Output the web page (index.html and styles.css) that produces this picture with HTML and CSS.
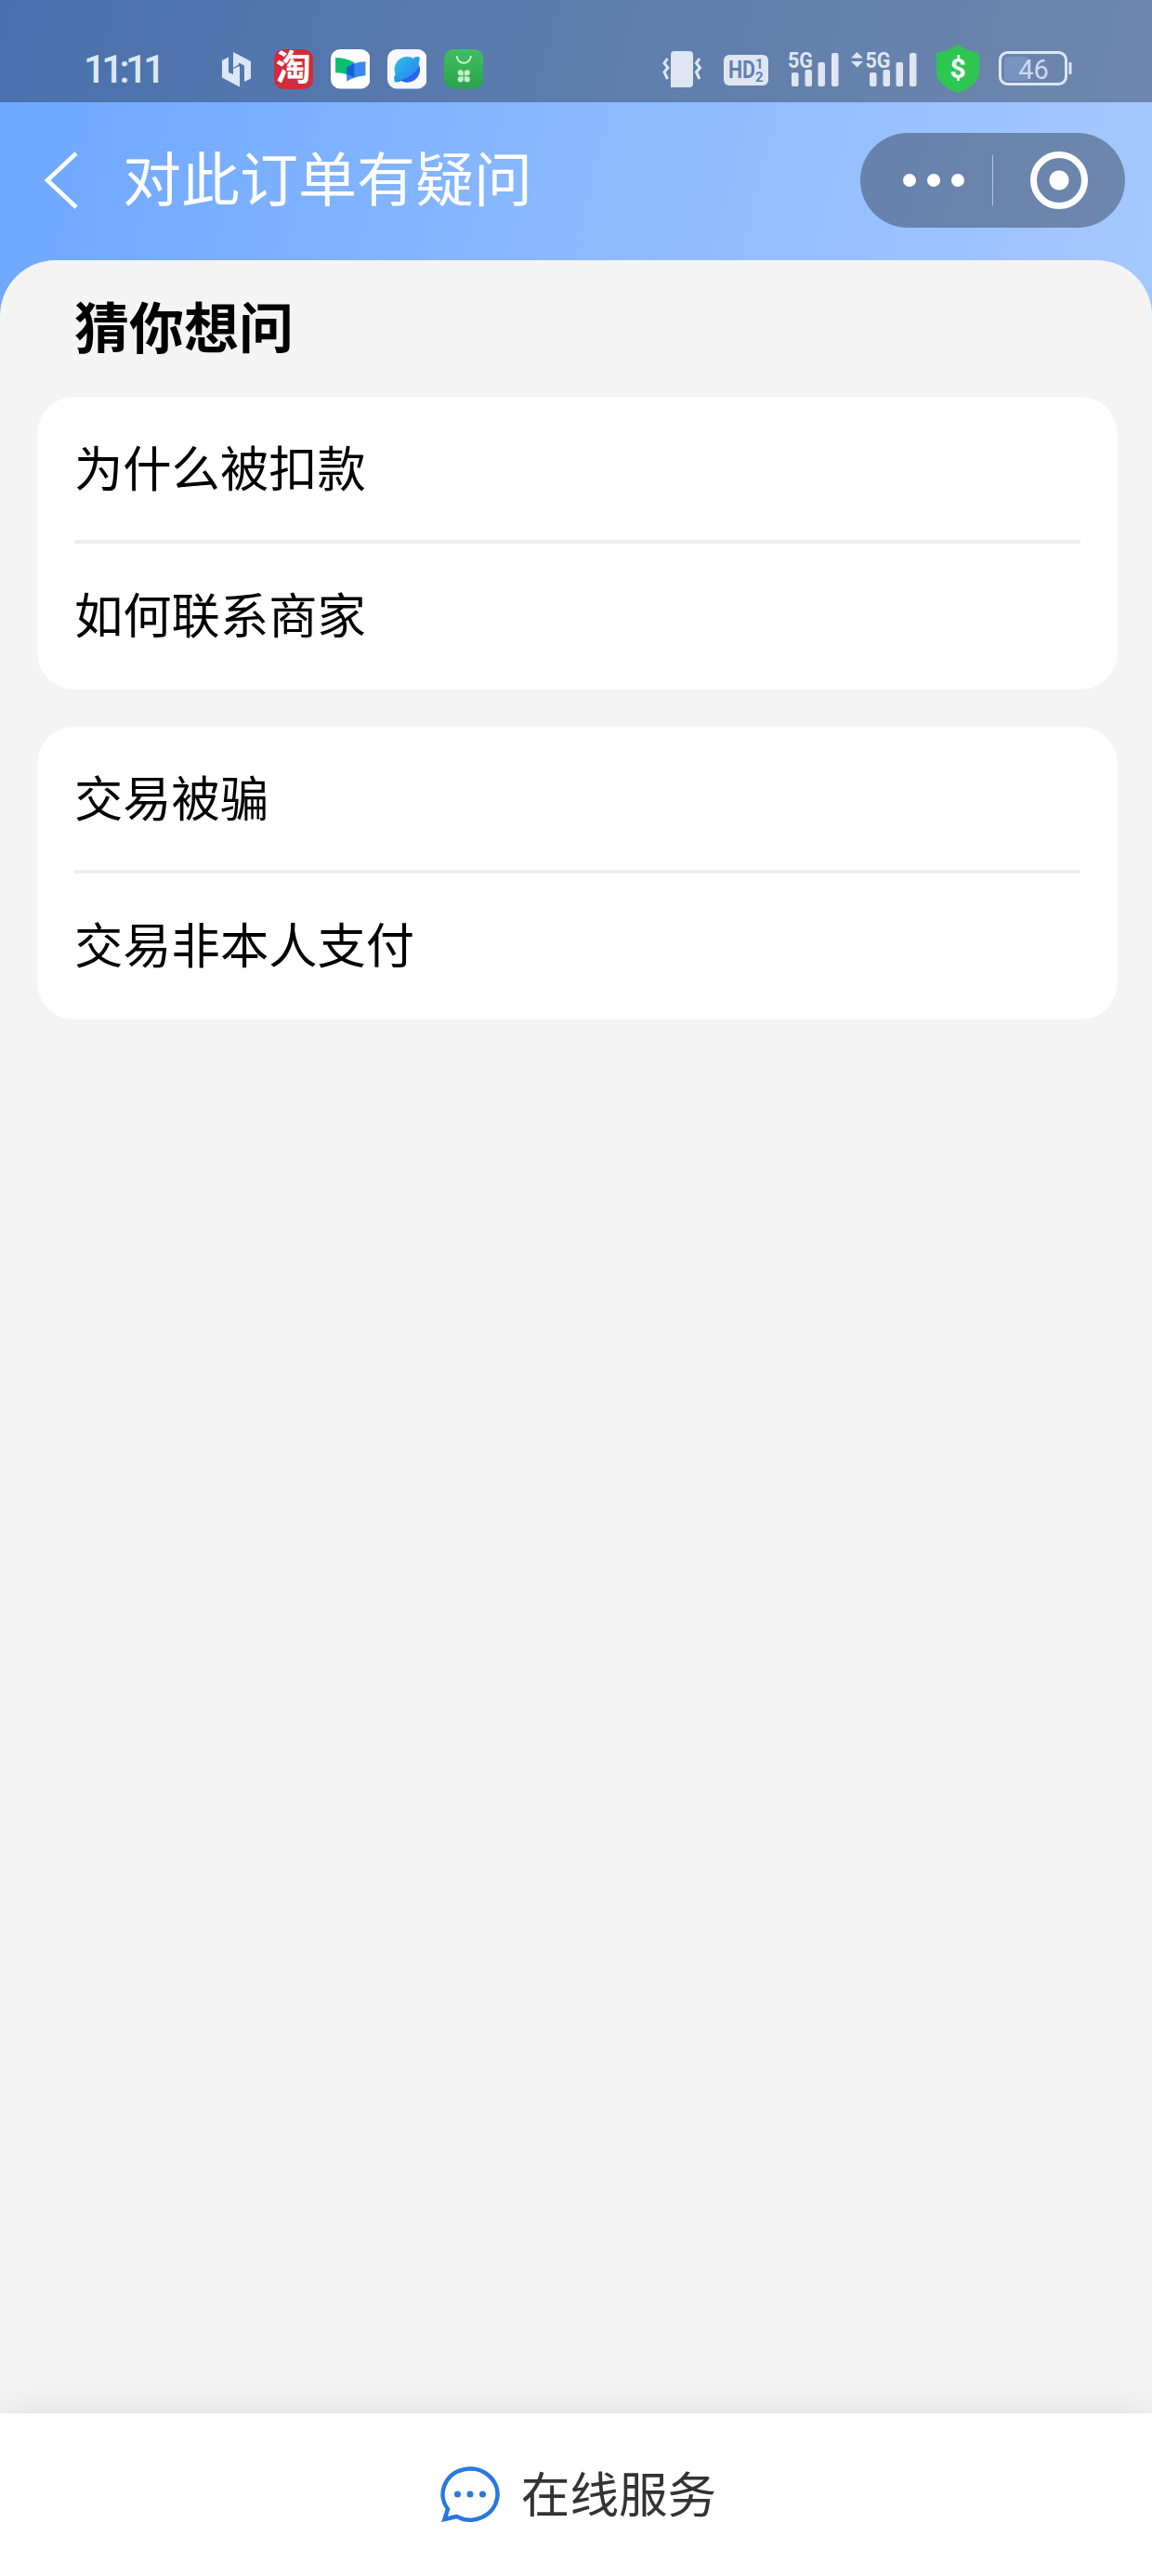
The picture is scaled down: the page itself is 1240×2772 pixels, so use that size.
FILE: index.html
```html
<!DOCTYPE html>
<html lang="zh-CN">
<head>
  <meta charset="UTF-8">
  <meta name="viewport" content="width=device-width, initial-scale=1.0">
  <title>对此订单有疑问</title>
  <link rel="stylesheet" href="styles.css">
</head>
<body>

  <div class="top">
    <div class="status-bar">
      <span class="time">11:11</span>

      <div class="notifications">
        <svg class="logo" width="31" height="38" viewBox="0 0 31 38" fill="#dde7f6">
          <path d="M0 9 L7 5.500 V22 L12 24 V18 L19 15 V37.500 L0 27.500 Z"/>
          <path d="M12 0 L31 10 V28.500 L24 32 V14.500 L18 11.500 V13.500 L12 17 Z"/>
        </svg>
        <div class="app taobao">淘</div>
        <svg class="app" viewBox="0 0 42 42">
          <rect width="42" height="42" rx="10" fill="#fff"/>
          <path d="M5 9 Q15 9 25 14 V30 Q15 25 5 25 Z" fill="#06c270"/>
          <path d="M17 19 Q26 13 37 13 V28 Q26 29 17 34 Z" fill="#3c87f5"/>
          <path d="M17 19 L25 15 V30 L17 27 Z" fill="#1460d6"/>
        </svg>
        <svg class="app" viewBox="0 0 42 42">
          <defs>
            <linearGradient id="planet" x1="0" y1="0" x2="1" y2="1">
              <stop offset="0" stop-color="#2bc3ec"/>
              <stop offset="1" stop-color="#2a78ee"/>
            </linearGradient>
          </defs>
          <rect width="42" height="42" rx="10" fill="#f6f8fc"/>
          <circle cx="21" cy="21.500" r="13.500" fill="url(#planet)"/>
          <path d="M28 9 Q33 7 34.500 9 Q34.500 14 32 17 Z" fill="#2a9bea"/>
          <path d="M8 27 Q6 33 8.500 35 Q13 35 16 33 Z" fill="#2196e6"/>
          <path d="M34.200 18 Q29 28 14 33 A13.500 13.500 0 0 0 34.200 18 Z" fill="#2c62ec"/>
        </svg>
        <svg class="app" viewBox="0 0 42 42">
          <defs>
            <linearGradient id="market" x1="0" y1="0" x2="0" y2="1">
              <stop offset="0" stop-color="#3fc060"/>
              <stop offset="1" stop-color="#2ba24c"/>
            </linearGradient>
          </defs>
          <rect width="42" height="42" rx="10" fill="url(#market)"/>
          <path d="M13.500 7 A7.500 7.500 0 0 0 28.500 7" fill="none" stroke="#c9f3d2" stroke-width="2"/>
          <g fill="#c4f2cf">
            <path d="M20.500 28 H17.500 A3 3 0 1 1 20.500 25 Z"/>
            <path d="M21.500 28 H24.500 A3 3 0 1 0 21.500 25 Z"/>
            <path d="M20.500 29 H17.500 A3 3 0 1 0 20.500 32 Z"/>
            <path d="M21.500 29 H24.500 A3 3 0 1 1 21.500 32 Z"/>
          </g>
        </svg>
      </div>

      <div class="system">
        <svg class="vibrate" width="43" height="39" viewBox="0 0 43 39">
          <path d="M9 39 V4 Q9 0 13 0 H29 Q33 0 33 4 V35 Q33 39 29 39 Z" fill="#dfe6f1"/>
          <path d="M5.500 8 L2 13 L6 18 L2 22.500 L5.500 30" fill="none" stroke="#dfe6f1" stroke-width="3"/>
          <path d="M40 8 L36.500 13 L40.500 18 L36.500 22.500 L40 30" fill="none" stroke="#dfe6f1" stroke-width="3"/>
        </svg>
        <svg class="hd" width="48" height="33" viewBox="0 0 48 33">
          <rect width="48" height="33" rx="6" fill="#dfe6f1"/>
          <g fill="#6080b3" font-weight="bold">
            <text x="5" y="25" font-size="25" textLength="29" lengthAdjust="spacingAndGlyphs">HD</text>
            <text x="34" y="15" font-size="15">1</text>
            <text x="34" y="28.500" font-size="15">2</text>
          </g>
        </svg>
        <svg class="signal" width="55" height="46" viewBox="0 -7 55 46" fill="#dfe6f1">
          <text x="0" y="18" font-size="24" font-weight="bold" textLength="27" lengthAdjust="spacingAndGlyphs">5G</text>
          <rect x="4" y="23" width="7.500" height="15" rx="2"/>
          <rect x="18.500" y="20" width="7.500" height="18" rx="2"/>
          <rect x="32.500" y="12" width="7.500" height="26" rx="2"/>
          <rect x="47" y="2" width="7.500" height="36" rx="2"/>
        </svg>
        <svg class="signal-data" width="71" height="46" viewBox="0 -7 71 46" fill="#dfe6f1">
          <path d="M0 7.500 L6.500 1 L13 7.500 Z M0 11 H13 L6.500 17.500 Z"/>
          <text x="15.500" y="18" font-size="24" font-weight="bold" textLength="27" lengthAdjust="spacingAndGlyphs">5G</text>
          <rect x="20" y="23" width="7.500" height="15" rx="2"/>
          <rect x="34.500" y="20" width="7.500" height="18" rx="2"/>
          <rect x="48.500" y="12" width="7.500" height="26" rx="2"/>
          <rect x="63" y="2" width="7.500" height="36" rx="2"/>
        </svg>
        <svg class="shield" width="46" height="52" viewBox="0 0 46 52">
          <path d="M23 0 Q33 7 46 9 V29 Q46 44 23 52 Q0 44 0 29 V9 Q13 7 23 0 Z" fill="#2fc653"/>
          <text x="23" y="36" font-size="30" font-weight="bold" text-anchor="middle" fill="#fff">$</text>
        </svg>
        <svg class="battery" width="79" height="38" viewBox="0 0 79 38">
          <rect x="6" y="6" width="26" height="26" rx="4" fill="#7893bd"/>
          <rect x="1.500" y="1.500" width="71" height="34" rx="8" fill="none" stroke="#d9e6f6" stroke-width="3"/>
          <rect x="75.500" y="12" width="3" height="13" rx="1" fill="#d9e6f6"/>
          <text x="37.500" y="29.500" font-size="29" text-anchor="middle" fill="#ccdaf0">46</text>
        </svg>
      </div>
    </div>

    <div class="nav-bar">
      <svg class="back" width="38" height="62" viewBox="0 0 38 62">
        <path d="M35 2 L4 31 L35 60" fill="none" stroke="#fff" stroke-width="4.500"/>
      </svg>
      <h1>对此订单有疑问</h1>
      <div class="capsule">
        <div class="dots"><i></i><i></i><i></i></div>
        <div class="close"></div>
      </div>
    </div>
  </div>

  <main class="content">
    <h2>猜你想问</h2>
    <div class="card">
      <div class="row">为什么被扣款</div>
      <div class="row">如何联系商家</div>
    </div>
    <div class="card">
      <div class="row">交易被骗</div>
      <div class="row">交易非本人支付</div>
    </div>
  </main>

  <footer class="service">
    <svg width="64" height="60" viewBox="0 0 64 60">
      <path d="M4.500 57 L8 46 A29.500 27.500 0 1 1 17.500 54 Z" fill="none" stroke="#2878e0" stroke-width="4.500"/>
      <g fill="#2878e0">
        <circle cx="18.500" cy="30" r="3.500"/>
        <circle cx="32" cy="30" r="3.500"/>
        <circle cx="45.500" cy="30" r="3.500"/>
      </g>
    </svg>
    <span>在线服务</span>
  </footer>

</body>
</html>
```
FILE: styles.css
```css
* {
  box-sizing: border-box;
}

body {
  margin: 0;
  height: 2772px;
  display: flex;
  flex-direction: column;
  background: #f4f4f4;
  color: #000;
  font-family: Roboto, "Noto Sans CJK SC", sans-serif;
}

h1, h2 {
  margin: 0;
}

svg {
  display: block;
  flex: none;
}

.top {
  height: 340px;
  flex: none;
  background: linear-gradient(105deg, #6ca6ff 0%, #8ab9ff 50%, #a6c8ff 100%);
}

/* status bar */
.status-bar {
  height: 110px;
  padding: 0 86px 0 90px;
  display: flex;
  align-items: center;
  background: rgba(0, 0, 0, 0.32);
}

.time {
  width: 149px;
  padding-top: 39px;
  line-height: 38px;
  font-size: 42px;
  font-weight: 500;
  letter-spacing: -4.6px;
  color: #dde7f6;
}

.notifications {
  display: flex;
  align-items: center;
  gap: 18.5px;
  padding-top: 39px;
}

.logo {
  margin-right: 6px;
}

.app {
  width: 42.5px;
  height: 42.5px;
}

.taobao {
  border-radius: 10px;
  background: #d12c3b;
  color: #fff;
  font-size: 38px;
  font-weight: 700;
  line-height: 40px;
  text-align: center;
}

.system {
  display: flex;
  align-items: center;
  margin-left: auto;
  padding-top: 38px;
}

.hd {
  margin: 3px 0 0 23px;
}

.signal {
  margin: -7px 0 0 21px;
}

.signal-data {
  margin: -7px 0 0 13px;
}

.shield {
  margin-left: 21px;
}

.battery {
  margin-left: 21px;
}

/* navigation */
.nav-bar {
  height: 170px;
  padding: 0 29px 2px 47px;
  display: flex;
  align-items: center;
}

.nav-bar h1 {
  margin-left: 47px;
  padding-top: 2px;
  font-size: 63px;
  font-weight: 400;
  line-height: 90px;
  color: #fff;
}

.capsule {
  width: 285px;
  height: 102px;
  margin-left: auto;
  border-radius: 51px;
  display: flex;
  align-items: center;
  background: rgba(0, 0, 0, 0.32);
}

.dots {
  width: 143px;
  height: 54px;
  padding-left: 46px;
  display: flex;
  align-items: center;
  gap: 12px;
  border-right: 1px solid rgba(255, 255, 255, 0.5);
}

.dots i {
  width: 14px;
  height: 14px;
  border-radius: 50%;
  background: #fff;
}

.close {
  width: 62px;
  height: 62px;
  margin-left: 40px;
  border: 7.5px solid #fff;
  border-radius: 50%;
  background: radial-gradient(circle, #fff 10px, transparent 11px);
}

/* question list */
.content {
  flex: 1;
  margin-top: -60px;
  padding: 31px 37px 0 40px;
  border-radius: 60px 60px 0 0;
  background: #f4f4f4;
}

.content h2 {
  margin: 0 0 28px 40px;
  font-size: 59px;
  font-weight: 700;
  line-height: 88px;
}

.card {
  height: 315px;
  margin-bottom: 40px;
  padding: 0 40px;
  border-radius: 40px;
  background: #fff;
}

.row {
  height: 157px;
  font-size: 52.3px;
  line-height: 158px;
}

.row:first-child {
  height: 158px;
  border-bottom: 4px solid #eee;
}

/* bottom bar */
.service {
  height: 175px;
  flex: none;
  display: flex;
  justify-content: center;
  align-items: center;
  gap: 23px;
  padding: 0 0 2px 5px;
  background: #fff;
  box-shadow: 0 0 40px rgba(0, 0, 0, 0.1);
  font-size: 52.6px;
  color: #333;
}

.service span {
  padding-bottom: 5px;
}
```
